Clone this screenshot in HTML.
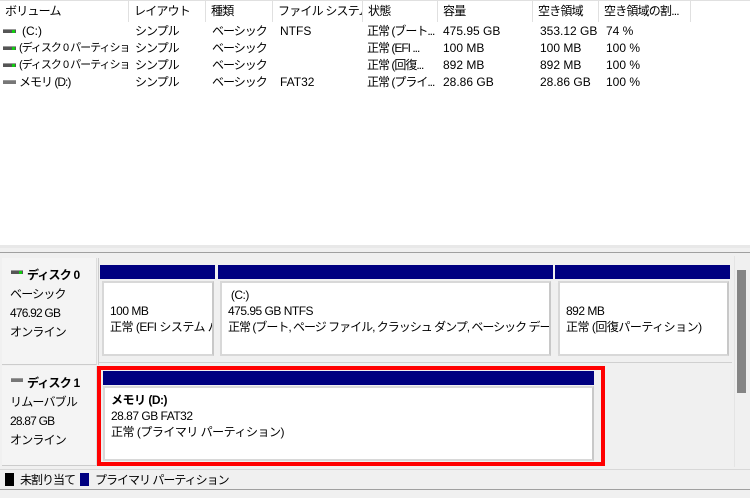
<!DOCTYPE html>
<html><head><meta charset="utf-8"><style>
*{margin:0;padding:0;box-sizing:border-box}
body{width:750px;height:498px;overflow:hidden;background:#f0f0f0;font-family:"Liberation Sans","Noto Sans CJK JP",sans-serif;font-size:12px;color:#000;position:relative;white-space:nowrap}
.a{position:absolute;white-space:nowrap;line-height:14px}
.j{letter-spacing:-1px}
#top{position:absolute;left:0;top:0;width:750px;height:245px;background:#fff}
.hd{position:absolute;top:0;height:22px;line-height:22px;border-right:1px solid #e0e0e0;padding-left:5px;background:#fff;overflow:hidden;letter-spacing:-0.8px}
.drv{position:absolute;width:13px;height:4px;background:#555;border-top:1px solid #999}
.drv i{position:absolute;right:1px;top:0;width:3px;height:3px;background:#1c1}
.lbl{position:absolute;left:2px;width:95px;background:#f4f4f4;border-right:1px solid #ddd;border-bottom:1px solid #ccc;padding:8px 0 0 8px;line-height:19px;letter-spacing:-0.8px}
.bar{position:absolute;height:14px;background:#000080}
.box{position:absolute;background:#fff;border:2px solid #d8d8d8;border-right-color:#c8c8c8;padding-left:6px;line-height:16px;overflow:hidden;letter-spacing:-0.5px}
</style></head><body>
<div id="top">
<div class="hd" style="left:0;width:129px">ボリューム</div>
<div class="hd" style="left:129px;width:77px">レイアウト</div>
<div class="hd" style="left:206px;width:67px">種類</div>
<div class="hd" style="left:273px;width:90px">ファイル システム</div>
<div class="hd" style="left:363px;width:75px">状態</div>
<div class="hd" style="left:438px;width:95px">容量</div>
<div class="hd" style="left:533px;width:66px">空き領域</div>
<div class="hd" style="left:599px;width:92px">空き領域の割...</div>
<div style="position:absolute;left:0;top:0;width:750px;height:1px;background:#e0e0e0"></div>

<div class="drv" style="left:3px;top:29px"><i></i></div>
<div class="drv" style="left:3px;top:46px"><i></i></div>
<div class="drv" style="left:3px;top:63px"><i></i></div>
<div class="drv" style="left:3px;top:80px;background:#777"></div>

<div class="a" style="left:22px;top:24px">(C:)</div>
<div class="a" style="left:19px;top:41px;font-size:11px;letter-spacing:-1px;width:110px;overflow:hidden">(ディスク 0 パーティショ...</div>
<div class="a" style="left:19px;top:58px;font-size:11px;letter-spacing:-1px;width:110px;overflow:hidden">(ディスク 0 パーティショ...</div>
<div class="a j" style="left:19px;top:75px">メモリ (D:)</div>

<div class="a j" style="left:135px;top:24px">シンプル</div>
<div class="a j" style="left:135px;top:41px">シンプル</div>
<div class="a j" style="left:135px;top:58px">シンプル</div>
<div class="a j" style="left:135px;top:75px">シンプル</div>

<div class="a j" style="left:212px;top:24px">ベーシック</div>
<div class="a j" style="left:212px;top:41px">ベーシック</div>
<div class="a j" style="left:212px;top:58px">ベーシック</div>
<div class="a j" style="left:212px;top:75px">ベーシック</div>

<div class="a" style="left:280px;top:24px">NTFS</div>
<div class="a" style="left:280px;top:75px">FAT32</div>

<div class="a j" style="left:367px;top:24px">正常 (ブート...</div>
<div class="a j" style="left:367px;top:41px">正常 (EFI ...</div>
<div class="a j" style="left:367px;top:58px">正常 (回復...</div>
<div class="a j" style="left:367px;top:75px">正常 (プライ...</div>

<div class="a" style="left:443px;top:24px">475.95 GB</div>
<div class="a" style="left:443px;top:41px">100 MB</div>
<div class="a" style="left:443px;top:58px">892 MB</div>
<div class="a" style="left:443px;top:75px">28.86 GB</div>

<div class="a" style="left:540px;top:24px">353.12 GB</div>
<div class="a" style="left:540px;top:41px">100 MB</div>
<div class="a" style="left:540px;top:58px">892 MB</div>
<div class="a" style="left:540px;top:75px">28.86 GB</div>

<div class="a" style="left:606px;top:24px">74 %</div>
<div class="a" style="left:606px;top:41px">100 %</div>
<div class="a" style="left:606px;top:58px">100 %</div>
<div class="a" style="left:606px;top:75px">100 %</div>
</div>

<div style="position:absolute;left:0;top:245px;width:750px;height:3px;background:#e8e8e8"></div>
<div style="position:absolute;left:0;top:252px;width:750px;height:1px;background:#a0a0a0"></div>

<!-- disk 0 -->
<div class="lbl" style="top:258px;height:107px"><b style="margin-left:17px">ディスク 0</b><br>ベーシック<br>476.92 GB<br>オンライン</div>
<div class="drv" style="left:11px;top:270px;width:12px"><i></i></div>
<div style="position:absolute;left:98px;top:258px;width:1px;height:107px;background:#ccc"></div>

<div class="bar" style="left:100px;top:265px;width:115px"></div>
<div class="bar" style="left:218px;top:265px;width:335px"></div>
<div class="bar" style="left:555px;top:265px;width:175px"></div>

<div class="box" style="left:102px;top:281px;width:112px;height:75px;padding-top:20px">100 MB<br>正常 (EFI システム パー</div>
<div class="box" style="left:220px;top:281px;width:331px;height:75px;padding-top:4px">&nbsp;(C:)<br>475.95 GB NTFS<br><span style="letter-spacing:-1px">正常 (ブート, ページ ファイル, クラッシュ ダンプ, ベーシック データ パーティシ</span></div>
<div class="box" style="left:558px;top:281px;width:171px;height:75px;padding-top:20px">892 MB<br>正常 (回復パーティション)</div>
<div style="position:absolute;left:99px;top:362px;width:633px;height:1px;background:#d0d0d0"></div>

<!-- disk 1 -->
<div class="lbl" style="top:366px;height:100px"><b style="margin-left:17px">ディスク 1</b><br>リムーバブル<br>28.87 GB<br>オンライン</div>
<div class="drv" style="left:11px;top:378px;width:12px;background:#777"></div>

<div style="position:absolute;left:97px;top:366px;width:508px;height:100px;border:4px solid #f00;background:#f0f0f0"></div>
<div class="bar" style="left:103px;top:371px;width:491px"></div>
<div class="box" style="left:103px;top:386px;width:491px;height:75px;padding-top:4px"><b>メモリ (D:)</b><br>28.87 GB FAT32<br>正常 (プライマリ パーティション)</div>

<!-- scrollbar -->
<div style="position:absolute;left:734px;top:256px;width:16px;height:211px;background:#f0f0f0;border-left:1px solid #e4e4e4"></div>
<div style="position:absolute;left:737px;top:270px;width:9px;height:123px;background:#858585"></div>

<!-- legend -->
<div style="position:absolute;left:0;top:469px;width:750px;height:1px;background:#d8d8d8"></div>
<div style="position:absolute;left:5px;top:473px;width:9px;height:13px;background:#000"></div>
<div class="a j" style="left:20px;top:473px">未割り当て</div>
<div style="position:absolute;left:80px;top:473px;width:9px;height:13px;background:#000080"></div>
<div class="a j" style="left:95px;top:473px">プライマリ パーティション</div>
<div style="position:absolute;left:0;top:489px;width:750px;height:1px;background:#a0a0a0"></div>
<div style="position:absolute;left:0;top:490px;width:750px;height:8px;background:#f0f0f0"></div>
</body></html>
